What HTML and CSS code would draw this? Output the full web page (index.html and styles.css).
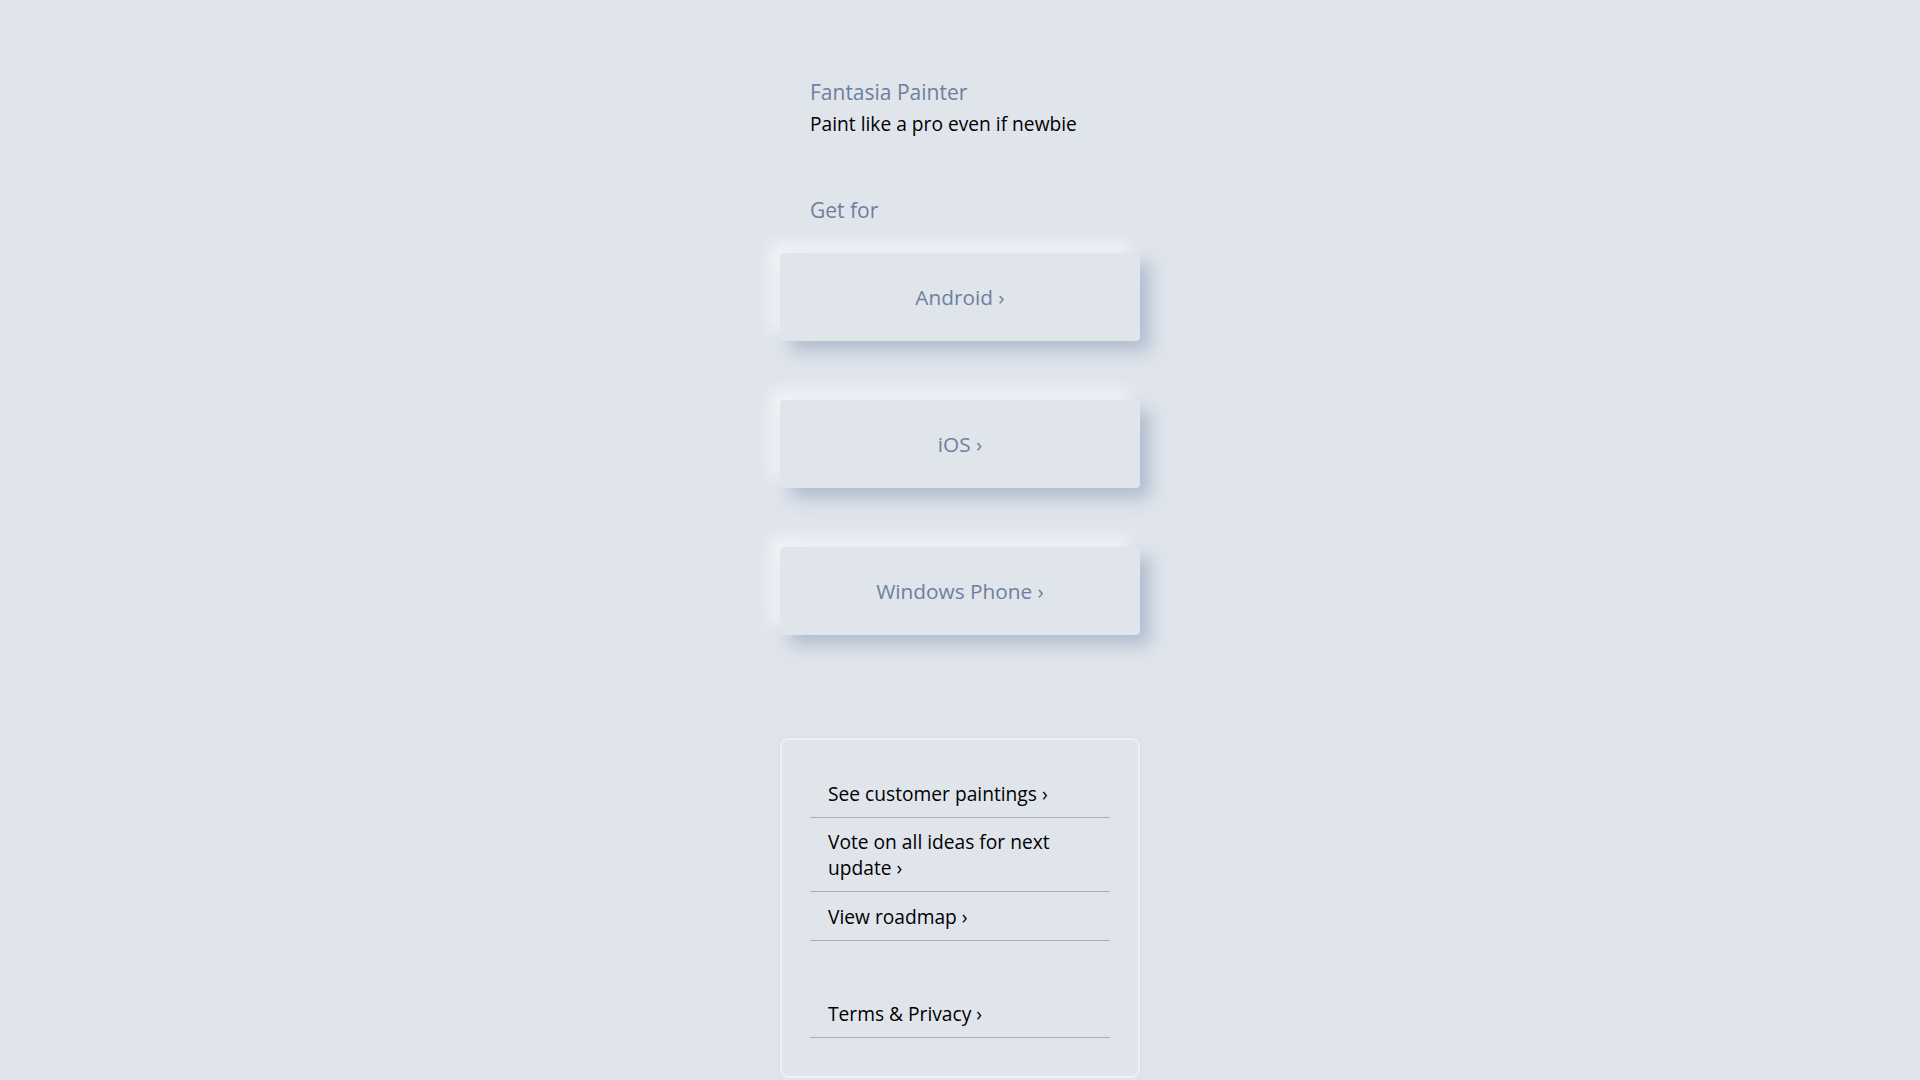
FILE: index.html
```html
<!DOCTYPE html>
<html lang="en">
<head>
  <meta charset="UTF-8" />
  <title>Fantasia Painter</title>
  <meta name="viewport" content="width=device-width, initial-scale=1.0" />
  <link rel="stylesheet" href="styles.css">
</head>
<body>
  <main class="page">
    <header class="intro">
      <h1>Fantasia Painter</h1>
      <p>Paint like a pro even if newbie</p>
    </header>

    <section class="get">
      <h2>Get for</h2>
      <a class="store-btn" href="#">Android ›</a>
      <a class="store-btn" href="#">iOS ›</a>
      <a class="store-btn" href="#">Windows Phone ›</a>
    </section>

    <nav class="links">
      <a class="link" href="#">See customer paintings ›</a>
      <a class="link" href="#">Vote on all ideas for next update ›</a>
      <a class="link" href="#">View roadmap ›</a>
      <a class="link link-terms" href="#">Terms &amp; Privacy ›</a>
    </nav>
  </main>
</body>
</html>
```

FILE: styles.css
```css
:root {
  --bg-color: #e0e5ec;
  --muted: #6f7f9d;
  --text-color: #000000;
  --line: #a8adb6;
  --dark-shadow: rgba(163, 177, 198, 0.8);
  --light-shadow: rgba(255, 255, 255, 0.65);
}

body {
  margin: 0;
  font-family: "Open Sans", sans-serif;
  background-color: var(--bg-color);
  color: var(--text-color);
}

.page {
  width: 360px;
  margin: 0 auto;
  padding-top: 76px;
}

.intro {
  padding: 0 30px;
}

.intro h1,
.intro p {
  margin: 0;
  font-weight: normal;
  line-height: 32px;
}

.intro h1 {
  font-size: 21px;
  color: var(--muted);
}

.intro p {
  font-size: 19.2px;
}

.get h2 {
  margin: 54px 0 27px;
  padding: 0 30px;
  font-size: 21px;
  font-weight: normal;
  line-height: 32px;
  color: var(--muted);
}

.store-btn {
  display: flex;
  align-items: center;
  justify-content: center;
  height: 87.5px;
  margin-bottom: 59.5px;
  border-radius: 4px;
  background-color: var(--bg-color);
  color: var(--muted);
  font-size: 20.8px;
  text-decoration: none;
  box-shadow: 10px 10px 18px var(--dark-shadow), -9px -9px 16px var(--light-shadow);
}

.links {
  display: flex;
  flex-direction: column;
  margin-top: 103.5px;
  padding: 30px 28px 38px;
  border: 2px solid rgba(255, 255, 255, 0.45);
  border-radius: 8px;
  box-shadow: 0 0 3px rgba(163, 177, 198, 0.25);
}

.link {
  padding: 11px 18px 10px;
  border-bottom: 1px solid var(--line);
  color: var(--text-color);
  font-size: 19.2px;
  line-height: 26px;
  text-decoration: none;
}

.link:nth-child(3) {
  padding-top: 12px;
}

.link-terms {
  margin-top: 49px;
}
```
